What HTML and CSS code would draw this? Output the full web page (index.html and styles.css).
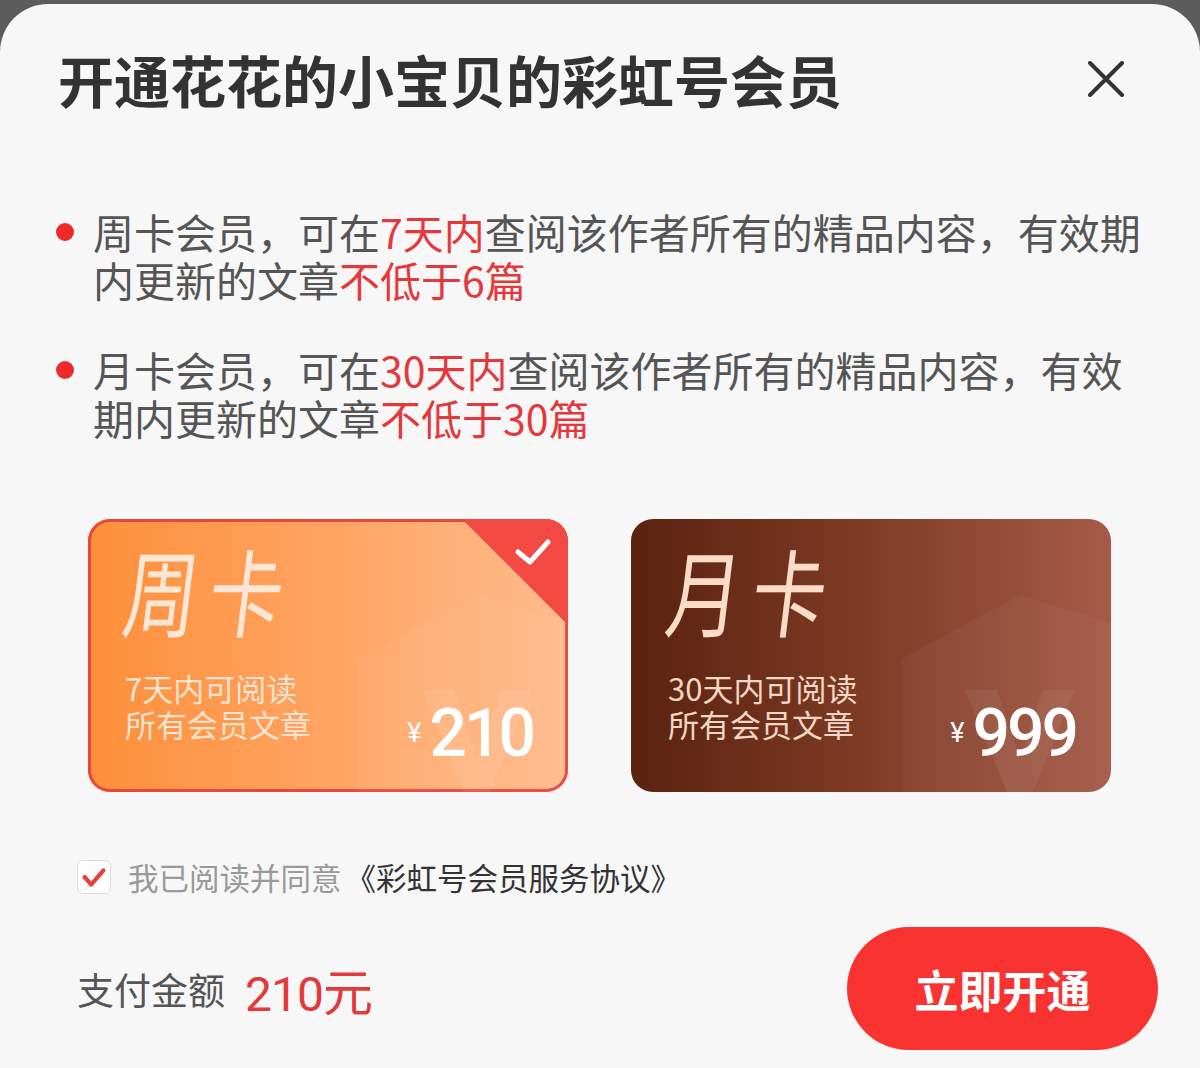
FILE: index.html
```html
<!DOCTYPE html>
<html lang="zh-CN">
<head>
    <meta charset="UTF-8" />
    <meta name="viewport" content="width=device-width, initial-scale=1.0"/>
    <title>开通彩虹号会员</title>
    <link rel="stylesheet" href="styles.css">
</head>
<body>

    <div class="sheet">
        <div class="sheet-head">
            <h1 class="sheet-title">开通花花的小宝贝的彩虹号会员</h1>
            <button class="close-btn" aria-label="关闭">
                <svg width="36" height="36" viewBox="0 0 36 36">
                    <path d="M2 2L34 34M34 2L2 34" stroke="#333" stroke-width="4" stroke-linecap="round" fill="none"/>
                </svg>
            </button>
        </div>

        <ul class="rules">
            <li>周卡会员，可在<em>7天内</em>查阅该作者所有的精品内容，有效期<br>内更新的文章<em>不低于6篇</em></li>
            <li>月卡会员，可在<em>30天内</em>查阅该作者所有的精品内容，有效<br>期内更新的文章<em>不低于30篇</em></li>
        </ul>

        <div class="plans">
            <!-- 周卡 (选中) -->
            <div class="plan plan-week active">
                <svg class="plan-mark" viewBox="0 0 480 273" preserveAspectRatio="none">
                    <polygon points="270,140 389,76 480,104 480,273 270,273" fill="#fff" fill-opacity="0.04"/>
                    <polygon points="334,171 366,171 389,240 412,171 444,171 402,273 376,273" fill="#fff" fill-opacity="0.08"/>
                </svg>
                <svg class="plan-corner" width="106" height="106" viewBox="0 0 106 106">
                    <polygon points="0,0 106,0 106,106" fill="#f24a43"/>
                    <polyline points="56,33 68,43 86,23" fill="none" stroke="#fff" stroke-width="5" stroke-linecap="round" stroke-linejoin="round"/>
                </svg>
                <div class="plan-name">周卡</div>
                <div class="plan-foot">
                    <div class="plan-desc">7天内可阅读<br>所有会员文章</div>
                    <div class="plan-price"><span class="yen">¥</span><span class="num">210</span></div>
                </div>
            </div>

            <!-- 月卡 -->
            <div class="plan plan-month">
                <svg class="plan-mark" viewBox="0 0 480 273" preserveAspectRatio="none">
                    <polygon points="270,140 389,76 480,104 480,273 270,273" fill="#fff" fill-opacity="0.035"/>
                    <polygon points="334,171 366,171 389,240 412,171 444,171 402,273 376,273" fill="#fff" fill-opacity="0.06"/>
                </svg>
                <div class="plan-name">月卡</div>
                <div class="plan-foot">
                    <div class="plan-desc">30天内可阅读<br>所有会员文章</div>
                    <div class="plan-price"><span class="yen">¥</span><span class="num">999</span></div>
                </div>
            </div>
        </div>

        <label class="agree">
            <span class="check-box">
                <svg width="34" height="34" viewBox="0 0 34 34">
                    <polyline points="7,17 14,25 27,10" fill="none" stroke="#e8403f" stroke-width="4.5" stroke-linecap="round" stroke-linejoin="round"/>
                </svg>
            </span>
            <span class="agree-text">我已阅读并同意<a class="agree-link">《彩虹号会员服务协议》</a></span>
        </label>

        <div class="pay-bar">
            <div class="pay-sum">
                <span class="pay-label">支付金额</span>
                <span class="pay-amount"><span class="num">210</span>元</span>
            </div>
            <button class="pay-btn">立即开通</button>
        </div>
    </div>

</body>
</html>
```

FILE: styles.css
```css
body {
    margin: 0;
    background: #5c5c5c;
    font-family: "Noto Sans CJK SC", "Noto Sans", sans-serif;
    color: #555;
}

.sheet {
    margin-top: 4px;
    height: 1064px;
    background: #f7f7f7;
    border-radius: 48px 48px 0 0;
    overflow: hidden;
}

/* 标题栏 */
.sheet-head {
    display: flex;
    align-items: center;
    justify-content: space-between;
    padding: 41px 76px 0 58px;
}

.sheet-title {
    margin: 0;
    font-size: 56px;
    line-height: 68px;
    font-weight: 700;
    color: #333;
}

.close-btn {
    background: none;
    border: none;
    padding: 0;
    width: 36px;
    height: 36px;
    cursor: pointer;
}

.close-btn svg {
    display: block;
}

/* 说明 */
.rules {
    list-style: none;
    margin: 94px 0 0;
    padding: 0 30px 0 93px;
}

.rules li {
    position: relative;
    font-size: 41px;
    line-height: 48px;
    white-space: nowrap;
    color: #555;
}

.rules li + li {
    margin-top: 42px;
}

.rules li::before {
    content: "";
    position: absolute;
    left: -37px;
    top: 16px;
    width: 18px;
    height: 18px;
    border-radius: 50%;
    background: #ee2b2b;
}

.rules em {
    font-style: normal;
    color: #e4393c;
}

/* 套餐卡片 */
.plans {
    display: flex;
    gap: 63px;
    margin-top: 78px;
    padding-left: 88px;
}

.plan {
    position: relative;
    box-sizing: border-box;
    width: 480px;
    height: 273px;
    padding: 30px 35px 0 37px;
    border-radius: 22px;
    overflow: hidden;
}

.plan-week {
    background: linear-gradient(to right, #fd8f3a, #ffa462 50%, #ffbb8d);
}

.plan-week.active {
    box-shadow: inset 0 0 0 3px #e8473c;
}

.plan-month {
    background: linear-gradient(to right, #5a220f, #7b3923 45%, #a65b48);
}

.plan-mark {
    position: absolute;
    left: 0;
    top: 0;
    width: 100%;
    height: 100%;
}

.plan-corner {
    position: absolute;
    top: 0;
    right: 0;
}

.plan-name,
.plan-foot {
    position: relative;
}

/* 大字标题：窄长、略微倾斜 */
.plan-name {
    font-size: 95px;
    line-height: 80px;
    letter-spacing: 14px;
    white-space: nowrap;
    color: #fde6d4;
    transform-origin: left center;
    transform: skewX(-7deg) scaleX(0.78);
}

.plan-month .plan-name {
    color: #fcdcc6;
}

.plan-foot {
    display: flex;
    justify-content: space-between;
    align-items: flex-start;
    margin-top: 41px;
}

.plan-desc {
    font-size: 31px;
    line-height: 36px;
    color: #fde3d0;
}

.plan-month .plan-desc {
    color: #f4d7c4;
}

.plan-price {
    margin-top: 30px;
    line-height: 66px;
    color: #fff;
    white-space: nowrap;
}

.plan-price .yen {
    font-family: Roboto, sans-serif;
    font-size: 27px;
    margin-right: 8px;
    vertical-align: 14px;
}

.plan-price .num {
    font-family: Roboto, sans-serif;
    font-size: 66px;
    font-weight: 500;
    letter-spacing: -3px;
}

/* 协议 */
.agree {
    display: flex;
    align-items: center;
    gap: 17px;
    margin-top: 67px;
    padding-left: 77px;
    height: 36px;
}

.check-box {
    box-sizing: border-box;
    width: 34px;
    height: 34px;
    background: #fff;
    border: 1.5px solid #dcdcdc;
    border-radius: 6px;
    display: flex;
    align-items: center;
    justify-content: center;
}

.check-box svg {
    display: block;
}

.agree-text {
    font-size: 30.5px;
    line-height: 36px;
    color: #999;
}

.agree-link {
    margin-left: 4px;
    color: #333;
}

/* 底部支付 */
.pay-bar {
    display: flex;
    align-items: center;
    justify-content: space-between;
    margin-top: 32px;
    padding: 0 42px 0 77px;
}

.pay-sum {
    display: flex;
    align-items: center;
    gap: 20px;
}

.pay-label {
    font-size: 37px;
    color: #555;
}

.pay-amount {
    font-size: 50px;
    color: #e4393c;
}

.pay-amount .num {
    font-family: Roboto, sans-serif;
    font-size: 48px;
    letter-spacing: -1px;
}

.pay-btn {
    width: 311px;
    height: 123px;
    border: none;
    border-radius: 62px;
    background: #f93232;
    color: #fff;
    font-family: "Noto Sans CJK SC", sans-serif;
    font-size: 44px;
    font-weight: 700;
    cursor: pointer;
}
```
